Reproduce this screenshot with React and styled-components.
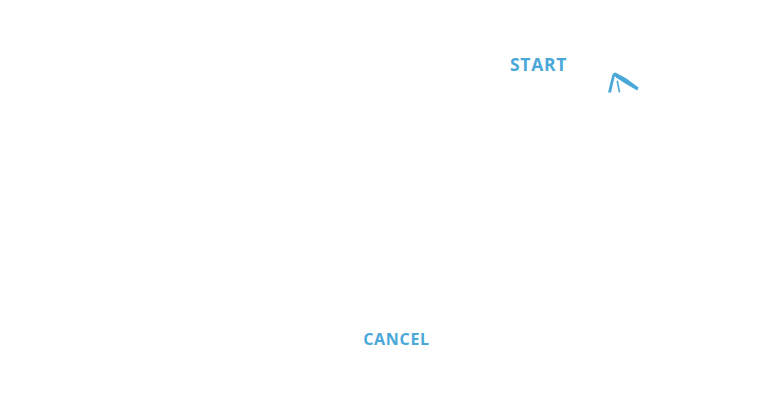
import React from "react";
import styled, { createGlobalStyle } from "styled-components";

const GlobalStyle = createGlobalStyle`
  html, body {
    margin: 0;
    padding: 0;
    background: #ffffff;
  }
`;

const Page = styled.div`
  width: 760px;
  height: 420px;
  display: flex;
  flex-direction: column;
  justify-content: space-between;
  font-family: "Open Sans", "Liberation Sans", sans-serif;
  color: #4aa8d9;
`;

const TopRow = styled.div`
  display: flex;
  align-items: flex-start;
  padding: 54px 0 0 510px;
`;

const Action = styled.button`
  border: 0;
  background: none;
  padding: 0;
  color: inherit;
  font-family: inherit;
  font-weight: 700;
  font-size: ${(p) => p.size}px;
  letter-spacing: ${(p) => p.spacing}px;
  line-height: 1.2;
  cursor: pointer;
`;

const Pointer = styled.svg`
  margin: 18px 0 0 41px;
  display: block;
`;

const BottomRow = styled.div`
  display: flex;
  justify-content: center;
  padding: 0 0 71px 33px;
`;

function PointerIcon() {
  return (
    <Pointer width="34" height="22" viewBox="0 0 34 22">
      <path d="M0 20.5 L4.4 2.4 L7.4 1.4 L3 20.5 Z" fill="#4aa8d9" />
      <path d="M4.8 1.6 L7.4 0.4 L18 6.2 L30.6 15.4 L29.2 18.4 L18 12 L8 5.6 Z" fill="#4aa8d9" />
      <path d="M8.4 9 L10 8.6 L12.4 20.2 L10.8 20.5 Z" fill="#4aa8d9" />
    </Pointer>
  );
}

export default function App() {
  return (
    <>
      <GlobalStyle />
      <Page>
        <TopRow>
          <Action size={17.5} spacing={0.7}>START</Action>
          <PointerIcon />
        </TopRow>
        <BottomRow>
          <Action size={16} spacing={0.7}>CANCEL</Action>
        </BottomRow>
      </Page>
    </>
  );
}
